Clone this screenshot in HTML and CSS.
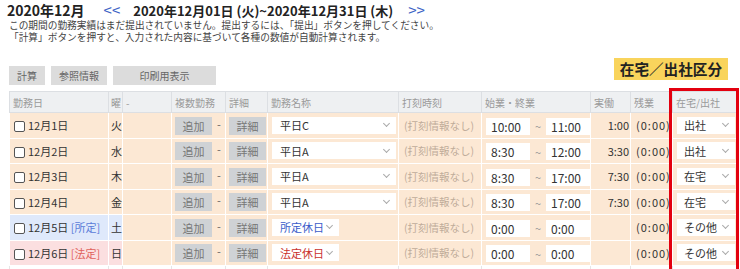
FILE: index.html
```html
<!DOCTYPE html>
<html lang="ja">
<head>
    <meta charset="UTF-8">
    <title>勤務実績</title>
    <link rel="stylesheet" href="styles.css">
</head>
<body>
<div class="page">
    <div class="period">
        <span class="month">2020年12月</span>
        <a class="nav prev">&lt;&lt;</a>
        <span class="range">2020年12月01日 (火)~2020年12月31日 (木)</span>
        <a class="nav next">&gt;&gt;</a>
    </div>
    <p class="notice">この期間の勤務実績はまだ提出されていません。提出するには、「提出」ボタンを押してください。<br>「計算」ボタンを押すと、入力された内容に基づいて各種の数値が自動計算されます。</p>

    <div class="toolbar">
        <div class="tools">
            <button class="tool">計算</button>
            <button class="tool">参照情報</button>
            <button class="tool wide">印刷用表示</button>
        </div>
        <span class="tag">在宅／出社区分</span>
    </div>

    <div class="sheet">
        <table class="days">
            <colgroup>
                <col style="width:99px"><col style="width:14px"><col style="width:49px"><col style="width:54px">
                <col style="width:42px"><col style="width:131px"><col style="width:83px"><col style="width:109px">
                <col style="width:40px"><col style="width:42px"><col style="width:66px">
            </colgroup>
            <thead>
                <tr>
                    <th>勤務日</th><th class="wd">曜</th><th>-</th><th>複数勤務</th><th>詳細</th><th>勤務名称</th>
                    <th>打刻時刻</th><th>始業・終業</th><th>実働</th><th>残業</th><th>在宅/出社</th>
                </tr>
            </thead>
            <tbody>
                <tr>
                    <td><span class="check"></span>12月1日</td><td class="wd">火</td><td></td>
                    <td><button class="mini">追加</button><span class="dash">-</span></td>
                    <td><button class="mini">詳細</button></td>
                    <td><div class="select name"><span>平日C</span><i class="chev"></i></div></td>
                    <td class="stamp">(打刻情報なし)</td>
                    <td class="span"><span class="time">10:00</span><span class="tilde">~</span><span class="time">11:00</span></td>
                    <td class="work">1:00</td><td class="over">(0:00)</td>
                    <td><div class="select place"><span>出社</span><i class="chev"></i></div></td>
                </tr>
                <tr>
                    <td><span class="check"></span>12月2日</td><td class="wd">水</td><td></td>
                    <td><button class="mini">追加</button><span class="dash">-</span></td>
                    <td><button class="mini">詳細</button></td>
                    <td><div class="select name"><span>平日A</span><i class="chev"></i></div></td>
                    <td class="stamp">(打刻情報なし)</td>
                    <td class="span"><span class="time">8:30</span><span class="tilde">~</span><span class="time">12:00</span></td>
                    <td class="work">3:30</td><td class="over">(0:00)</td>
                    <td><div class="select place"><span>出社</span><i class="chev"></i></div></td>
                </tr>
                <tr>
                    <td><span class="check"></span>12月3日</td><td class="wd">木</td><td></td>
                    <td><button class="mini">追加</button><span class="dash">-</span></td>
                    <td><button class="mini">詳細</button></td>
                    <td><div class="select name"><span>平日A</span><i class="chev"></i></div></td>
                    <td class="stamp">(打刻情報なし)</td>
                    <td class="span"><span class="time">8:30</span><span class="tilde">~</span><span class="time">17:00</span></td>
                    <td class="work">7:30</td><td class="over">(0:00)</td>
                    <td><div class="select place"><span>在宅</span><i class="chev"></i></div></td>
                </tr>
                <tr>
                    <td><span class="check"></span>12月4日</td><td class="wd">金</td><td></td>
                    <td><button class="mini">追加</button><span class="dash">-</span></td>
                    <td><button class="mini">詳細</button></td>
                    <td><div class="select name"><span>平日A</span><i class="chev"></i></div></td>
                    <td class="stamp">(打刻情報なし)</td>
                    <td class="span"><span class="time">8:30</span><span class="tilde">~</span><span class="time">17:00</span></td>
                    <td class="work">7:30</td><td class="over">(0:00)</td>
                    <td><div class="select place"><span>在宅</span><i class="chev"></i></div></td>
                </tr>
                <tr class="holiday">
                    <td class="day-off"><span class="check"></span>12月5日 <span class="kind">[所定]</span></td><td class="day-off wd">土</td><td></td>
                    <td><button class="mini">追加</button><span class="dash">-</span></td>
                    <td><button class="mini">詳細</button></td>
                    <td><div class="select short"><span>所定休日</span><i class="chev"></i></div></td>
                    <td class="stamp">(打刻情報なし)</td>
                    <td class="span"><span class="time">0:00</span><span class="tilde">~</span><span class="time">0:00</span></td>
                    <td class="work"></td><td class="over">(0:00)</td>
                    <td><div class="select place"><span>その他</span><i class="chev"></i></div></td>
                </tr>
                <tr class="legal">
                    <td class="day-off"><span class="check"></span>12月6日 <span class="kind">[法定]</span></td><td class="day-off wd">日</td><td></td>
                    <td><button class="mini">追加</button><span class="dash">-</span></td>
                    <td><button class="mini">詳細</button></td>
                    <td><div class="select short"><span>法定休日</span><i class="chev"></i></div></td>
                    <td class="stamp">(打刻情報なし)</td>
                    <td class="span"><span class="time">0:00</span><span class="tilde">~</span><span class="time">0:00</span></td>
                    <td class="work"></td><td class="over">(0:00)</td>
                    <td><div class="select place"><span>その他</span><i class="chev"></i></div></td>
                </tr>
                <tr class="plain">
                    <td></td><td></td><td></td>
                    <td><button class="mini"></button></td>
                    <td><button class="mini"></button></td>
                    <td></td><td></td><td></td><td></td><td></td><td></td>
                </tr>
            </tbody>
        </table>
        <div class="highlight"></div>
    </div>
</div>
</body>
</html>
```
FILE: styles.css
```css
body {
    margin: 0;
    font-family: "Noto Sans CJK JP", "Noto Sans", sans-serif;
    color: #333;
    background: #fff;
    overflow: hidden;
}

.page {
    padding: 1px 2px 0 9px;
}

.period {
    display: flex;
    align-items: baseline;
    height: 18px;
    margin-left: -2px;
    font-size: 14px;
    font-weight: bold;
    line-height: 18px;
    color: #222;
}

.month {
    margin-right: 19px;
}

.nav {
    color: #3d63c6;
    font-weight: normal;
    font-size: 15px;
}

.range {
    margin: 0 15px 0 13px;
    font-size: 13px;
}

.notice {
    margin: 0;
    font-size: 9.7px;
    line-height: 12px;
    color: #444;
}

.toolbar {
    display: flex;
    justify-content: space-between;
    align-items: flex-start;
    margin-top: 14px;
    height: 28px;
}

.tools {
    display: flex;
    gap: 6px;
    margin-top: 9px;
}

.tool {
    height: 19px;
    padding: 0 8px;
    border: none;
    background: #dcdcdc;
    color: #666;
    font-family: inherit;
    font-size: 10px;
}

.tool.wide {
    width: 103px;
}

.tag {
    margin-top: 1px;
    margin-right: 10px;
    padding: 0 6px;
    height: 22px;
    line-height: 22px;
    background: #f9d45c;
    font-size: 14.6px;
    font-weight: bold;
    color: #222;
}

.sheet {
    position: relative;
    margin-top: 6px;
}

.days {
    width: 729px;
    table-layout: fixed;
    border-collapse: collapse;
}

.days th {
    height: 20px;
    padding: 0 3px;
    background: #eef0f2;
    border: 1px solid #dcdfe3;
    color: #9a9a9a;
    font-size: 10px;
    font-weight: normal;
    text-align: left;
    white-space: nowrap;
}

.days td {
    height: 24.5px;
    padding: 0 3px;
    background: #fce8d4;
    border: 1px solid #fff;
    font-size: 11px;
    white-space: nowrap;
}

.days .wd {
    padding: 0 0 0 2px;
    overflow: visible;
}

.days tr.plain td {
    background: #fff;
    border-color: #e6e6e6;
}

.holiday .day-off {
    background: #dfe9fb;
}

.legal .day-off {
    background: #fbdfe0;
}

.holiday .kind {
    color: #5a7bd8;
}

.legal .kind {
    color: #e0615c;
}

.check {
    display: inline-block;
    width: 9px;
    height: 9px;
    margin: 0 3px 0 1px;
    border: 1.5px solid #555;
    border-radius: 2px;
    background: #fff;
    vertical-align: -2px;
}

.mini {
    width: 37px;
    height: 18px;
    padding: 0;
    border: none;
    background: #cfd2d5;
    color: #777;
    font-family: inherit;
    font-size: 11px;
    vertical-align: middle;
}

.dash {
    margin-left: 5px;
    color: #666;
}

.select {
    display: flex;
    justify-content: space-between;
    align-items: center;
    height: 17px;
    margin-left: 1px;
    padding: 0 7px 0 8px;
    background: #fff;
    font-size: 11px;
    box-sizing: border-box;
}

.select.name {
    width: 124px;
}

.select.short {
    width: 67px;
}

.holiday .short span {
    color: #3a5cc9;
}

.legal .short span {
    color: #c9302c;
}

.select.place {
    width: 58px;
    padding-left: 7px;
}

.chev {
    width: 4px;
    height: 4px;
    margin-top: -3px;
    border-right: 1px solid #aaa;
    border-bottom: 1px solid #aaa;
    transform: rotate(45deg);
}

.days .stamp {
    padding-left: 5px;
    color: #bfac9a;
    font-size: 10.5px;
    overflow: hidden;
}

.days .span {
    padding-left: 4px;
}

.time {
    display: inline-block;
    width: 44px;
    height: 17px;
    padding-left: 5px;
    box-sizing: border-box;
    background: #fff;
    font-size: 12px;
    line-height: 17px;
    vertical-align: middle;
}

.tilde {
    display: inline-block;
    width: 16px;
    text-align: center;
    color: #999;
    vertical-align: middle;
}

.days .work {
    text-align: right;
    padding-right: 1px;
}

.days .over {
    padding-left: 5px;
    letter-spacing: 1px;
}

.highlight {
    position: absolute;
    left: 660px;
    top: -3px;
    width: 64px;
    height: 200px;
    border: 3px solid #e3000f;
}
```
